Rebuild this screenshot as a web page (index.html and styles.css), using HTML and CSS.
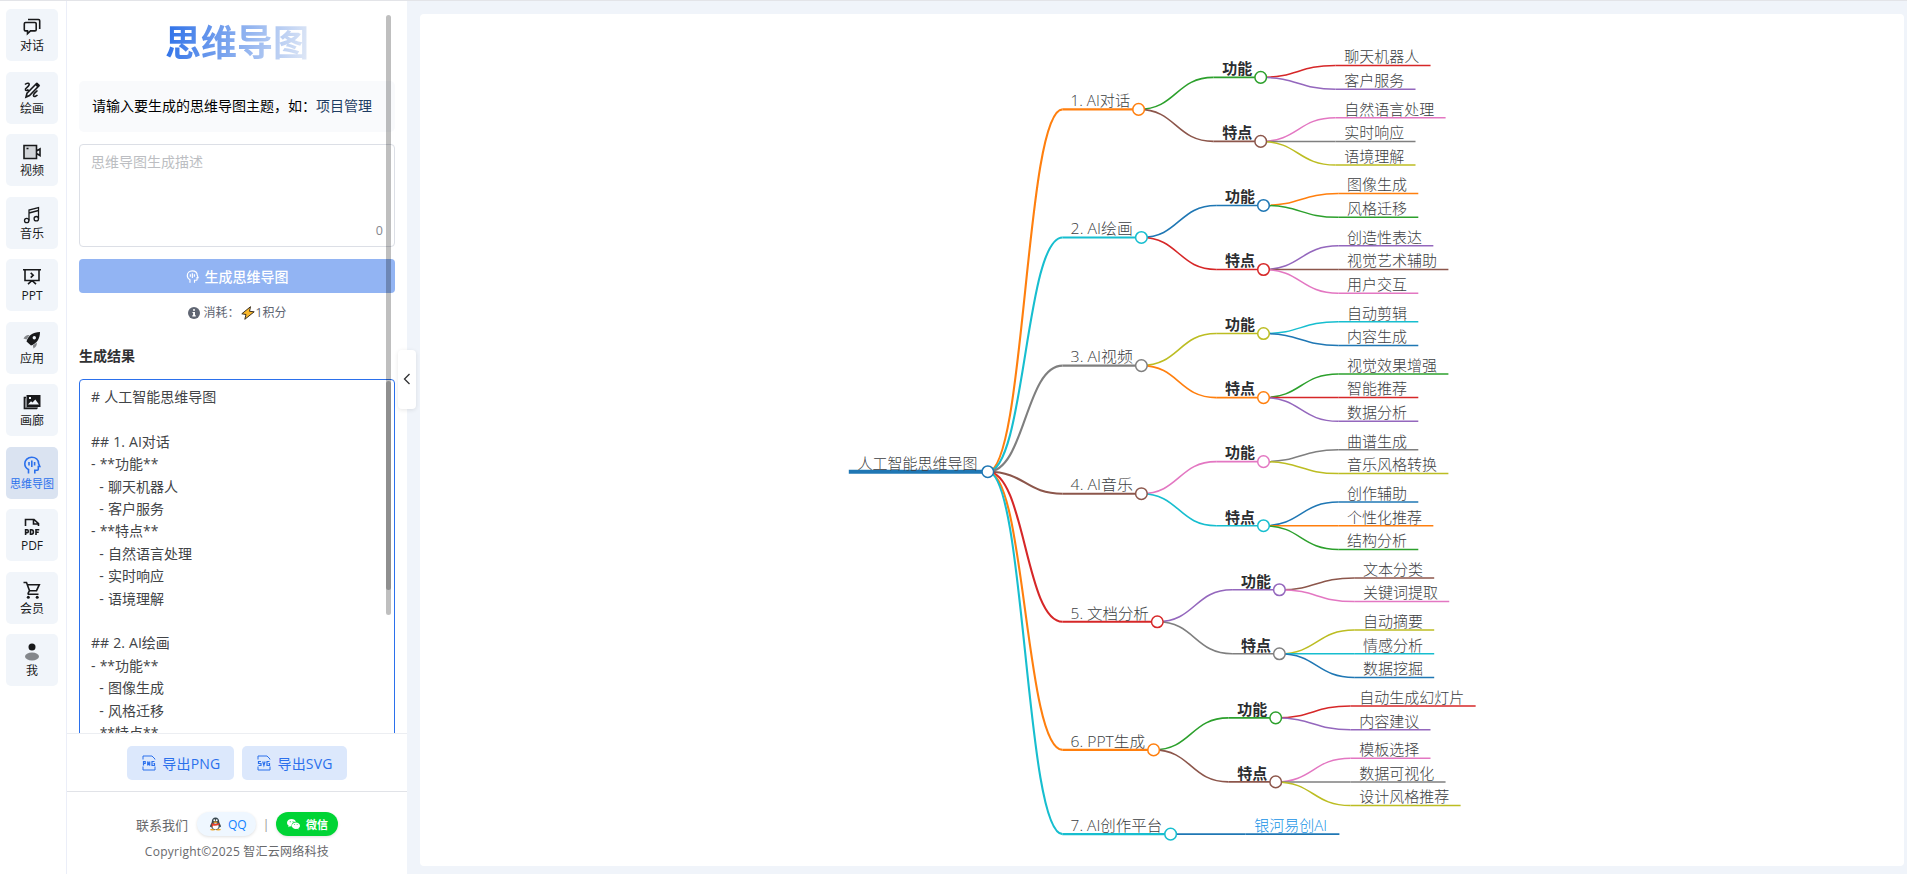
FILE: index.html
```html
<!DOCTYPE html>
<html lang="zh-CN">
<head>
    <meta charset="UTF-8">
    <meta name="viewport" content="width=device-width, initial-scale=1.0">
    <title>思维导图</title>
    <link rel="stylesheet" href="styles.css">
</head>
<body>
    <nav class="sidebar">
        <a class="nav-item">
            <svg viewBox="0 0 18 18"><path class="line" d="M5 1.500h10.500q1.200 0 1.200 1.200V11M2.500 4.500h9.500q1.200 0 1.200 1.200v6q0 1.200-1.200 1.200H7.500l-3 2.800v-2.800h-2q-1.200 0-1.200-1.200v-6q0-1.200 1.200-1.200z"/></svg>
            <span>对话</span>
        </a>
        <a class="nav-item">
            <svg viewBox="0 0 18 18"><path class="line" d="M2 3.500c2-2 5-1.500 4 .7C5 6.500 1.500 7.500 2.500 9c.8 1 2.500 0 3-.6M3 16l1-3.800L13.500 2.500l2.500 2.300L6.500 14.500zM14.500 9.500c-2 2-4.500 3.500-4 5.200.5 1.500 2.500.5 4-.7"/><path d="M12 3.800 14.200 1.600l2.600 2.500L14.500 6.500z"/></svg>
            <span>绘画</span>
        </a>
        <a class="nav-item">
            <svg viewBox="0 0 18 18"><rect class="soft-fill" x="1" y="2.500" width="12.500" height="13"/><path class="line" d="M1 2.500h12.500v13H1zM13.500 8l3.500-2v6.500l-3.500-2M3.500 5.500h2"/></svg>
            <span>视频</span>
        </a>
        <a class="nav-item">
            <svg viewBox="0 0 18 18"><path class="line thin" d="M6 14.500V4l9.500-2.500v11M6 7l9.500-2.500"/><circle class="line thin" cx="3.700" cy="14.500" r="2.200"/><circle class="line thin" cx="13.300" cy="12.700" r="2.200"/></svg>
            <span>音乐</span>
        </a>
        <a class="nav-item">
            <svg viewBox="0 0 18 18"><path class="line" d="M0 1.700h18M2 2v10.500h14V2M7.700 4.800l2.500 2.400-2.500 2.400M9 12.500l-4 3.700M9 12.500l4 3.700"/></svg>
            <span>PPT</span>
        </a>
        <a class="nav-item">
            <svg viewBox="0 0 18 18"><path d="M3.500 10.500C5.500 4.500 9.500 1 17 1 17 8 13.500 12.500 8 14.500z"/><path class="soft" d="M.5 7.500C2 4.700 4 3.500 6.500 4l-3 4.500zM10.500 17.500c2.500-1.500 3.700-3.500 3.300-6l-4 3z"/><circle class="hole" cx="11.300" cy="6.800" r="1.700"/></svg>
            <span>应用</span>
        </a>
        <a class="nav-item">
            <svg viewBox="0 0 18 18"><path class="soft" d="M1 5h2v9h12v2H1z"/><path class="line thin" d="M3 4.500H1.300V15.500H14"/><path fill-rule="evenodd" d="M3.500 2h14v12h-14zM5 11.500h11l-3.700-5-2.800 3-1.500-1.300zM6 4v2h2V4z"/></svg>
            <span>画廊</span>
        </a>
        <a class="nav-item active">
            <svg viewBox="0 0 18 18"><use href="#brain"/></svg>
            <span>思维导图</span>
        </a>
        <a class="nav-item">
            <svg viewBox="0 0 18 18"><path class="line" d="M2.500 8V1.500H11l4.500 4.200V8M10.500 1.500V6h5"/><path class="line" d="M2.600 17v-5.200h1.500q1.200 0 1.200 1.500t-1.200 1.500H2.600M7.500 11.800v4.500h1q1.900 0 1.900-2.200t-1.900-2.300zM13 17v-5.200h3.300M13 14.300h2.700"/></svg>
            <span>PDF</span>
        </a>
        <a class="nav-item">
            <svg viewBox="0 0 18 18"><path class="line" d="M.5 1.500h3l3 8.200-1.300 2.500q-.5 1 .8 1h9.500M4.300 3.700h12l-2.800 6h-7"/><circle cx="5.300" cy="16.300" r="1.500"/><circle cx="14.200" cy="16.300" r="1.500"/></svg>
            <span>会员</span>
        </a>
        <a class="nav-item">
            <svg viewBox="0 0 18 18"><circle cx="9" cy="4" r="3.500"/><ellipse class="soft" cx="9" cy="13.500" rx="7" ry="4"/></svg>
            <span>我</span>
        </a>
    </nav>

    <aside class="panel">
        <div class="panel-body">
            <h1>思维导图</h1>
            <div class="hint">请输入要生成的思维导图主题，如：<a>项目管理</a></div>
            <div class="prompt">
                <span class="placeholder">思维导图生成描述</span>
                <span class="count">0</span>
            </div>
            <button class="btn-generate">
                <svg viewBox="0 0 18 18"><use href="#brain"/></svg>
                生成思维导图
            </button>
            <div class="cost">
                <svg class="info" viewBox="0 0 12 12"><circle cx="6" cy="6" r="6"/><path d="M5 2.300h2v1.500H5zM4.500 5H7v3.200h.8v1.200H4.300V8.200h.8V6h-.6z" fill="#fff"/></svg>
                <span>消耗：</span>
                <svg class="bolt" viewBox="0 0 14 14"><path d="M9.500.7.800 7.800l4.200.7L3.800 13.300 13.200 5.800 8.500 5.300z" fill="#fbb92c" stroke="#3a3023" stroke-width="1"/></svg>
                <span>1积分</span>
            </div>
            <h2>生成结果</h2>
            <pre class="result"># 人工智能思维导图

## 1. AI对话
- **功能**
  - 聊天机器人
  - 客户服务
- **特点**
  - 自然语言处理
  - 实时响应
  - 语境理解

## 2. AI绘画
- **功能**
  - 图像生成
  - 风格迁移
- **特点**</pre>
            <i class="scroll scroll-outer"></i>
            <i class="scroll scroll-inner"></i>
        </div>
        <div class="export">
            <button class="btn-export">
                <svg viewBox="0 0 14 16"><path d="M1 4.500V1h9l3 3v.5M1 11.500V15h12v-3.500"/><path class="tag" d="M1.500 10.500v-4h1.700v2H1.500M5.700 10.500v-4l2 4v-4M12.500 6.500H10v4h2.500v-2h-1"/></svg>
                导出PNG
            </button>
            <button class="btn-export">
                <svg viewBox="0 0 14 16"><path d="M1 4.500V1h9l3 3v.5M1 11.500V15h12v-3.500"/><path class="tag" d="M4 6.500H1.500v2H4v2H1.500M5.700 6.500l1.200 4 1.200-4M12.500 6.500H10v4h2.500v-2h-1"/></svg>
                导出SVG
            </button>
        </div>
        <footer>
            <div class="contact">
                <span>联系我们</span>
                <a class="pill qq">
                    <svg viewBox="0 0 14 14"><ellipse cx="4" cy="13" rx="2.800" ry="1" fill="#f5a623"/><ellipse cx="10" cy="13" rx="2.800" ry="1" fill="#f5a623"/><path d="M7 0C4.500 0 3 1.800 3 4.500 3 6 .8 8 1 10.500l1.300-.8C2.800 12 4.500 13 7 13s4.200-1 4.700-3.300l1.300.8C13.200 8 11 6 11 4.500 11 1.800 9.500 0 7 0z" fill="#37474f"/><ellipse cx="7" cy="9.500" rx="3.300" ry="3.200" fill="#fff"/><path d="M2.800 6q4.200 2 8.400 0v1.800q-4.200 1.700-7 .8V10H3z" fill="#e8402a"/><circle cx="5.700" cy="3" r="1" fill="#fff"/><circle cx="8.300" cy="3" r="1" fill="#fff"/><ellipse cx="7" cy="5.200" rx="2.300" ry=".8" fill="#f5a623"/></svg>
                    QQ
                </a>
                <span class="divider">|</span>
                <a class="pill wechat">
                    <svg viewBox="0 0 14 12"><path d="M5 .5C2.200.5 0 2.300 0 4.600c0 1.300.7 2.400 1.800 3.200L1.300 9.500 3.200 8.500l1.800.3C4.500 5.500 7 3.500 9.700 3.700 9.200 1.800 7.200.5 5 .5z" fill="#fff"/><path d="M9.600 4.400c-2.500 0-4.400 1.600-4.400 3.500s1.900 3.500 4.400 3.500l1.500-.3 1.500.8-.4-1.400C13.300 9.900 14 9 14 7.900c0-1.900-1.900-3.500-4.400-3.500z" fill="#fff"/><path d="M3 3h1v1H3zM6 3h1v1H6zM7.800 6.300h.9v.9h-.9zM10.500 6.300h.9v.9h-.9z" fill="#00d435"/></svg>
                    微信
                </a>
            </div>
            <div class="copyright">Copyright©2025 智汇云网络科技</div>
        </footer>
        <button class="collapse">
            <svg viewBox="0 0 8 12"><path d="M6.500 1 1.500 6l5 5"/></svg>
        </button>
    </aside>

    <main>
        <svg id="mindmap" class="mindmap"></svg>
    </main>

    <svg class="defs">
        <symbol id="brain" viewBox="0 0 18 18">
            <path class="line" d="M5.500 17.500v-4C3 12.200 1.800 10 1.800 7.700 1.800 4 4.800 1.200 8.700 1.200s6.700 2.600 6.900 6.300l1.200 3h-1.500v2.700q0 1-1 1h-2.500v3.300"/>
            <path class="line" d="M6 6v3.500M8.800 4.500v6.500M11.600 6v3.500"/>
        </symbol>
    </svg>
    <script src="script.js"></script>
</body>
</html>
```
FILE: styles.css
```css
* {
    margin: 0;
    padding: 0;
    box-sizing: border-box;
}

body {
    display: flex;
    height: 100vh;
    overflow: hidden;
    border-top: 1px solid #e3e4e8;
    background: #f0f4fa;
    color: #303133;
    font-family: "Open Sans", "Noto Sans CJK SC", sans-serif;
    font-size: 14px;
}

button {
    border: none;
    font-family: inherit;
    cursor: pointer;
}

.defs {
    position: absolute;
    width: 0;
    height: 0;
}

.line {
    fill: none;
    stroke: currentColor;
    stroke-width: 1.6;
}

.line.thin {
    stroke-width: 1.3;
}

.soft {
    opacity: 0.5;
}

.soft-fill {
    opacity: 0.15;
}

.hole {
    fill: #f0f4fa;
}

/* Sidebar */
.sidebar {
    width: 67px;
    padding: 8px 0 0 6px;
    display: flex;
    flex-direction: column;
    gap: 10.5px;
    background: #fff;
    border-right: 1px solid #ebeef8;
}

.nav-item {
    width: 52px;
    height: 52px;
    padding-top: 9px;
    display: flex;
    flex-direction: column;
    align-items: center;
    gap: 1px;
    flex-shrink: 0;
    border-radius: 5px;
    background: #f1f5fa;
    color: #18191b;
    font-size: 12px;
    line-height: 18px;
    white-space: nowrap;
}

.nav-item svg {
    width: 18px;
    height: 18px;
    fill: currentColor;
}

.nav-item.active {
    background: #dae3f1;
    color: #2b70ec;
    font-size: 11px;
}

/* Left panel */
.panel {
    position: relative;
    width: 340px;
    display: flex;
    flex-direction: column;
    background: #fff;
}

.panel-body {
    height: 733px;
    padding: 0 12px;
    overflow: hidden;
    border-bottom: 1px solid #eceef2;
    flex-shrink: 0;
}

h1 {
    width: 144px;
    margin: 16px auto 12px;
    font-size: 36px;
    line-height: 52px;
    white-space: nowrap;
    background: linear-gradient(100deg, #2b6fe8 0%, #e3eaf6 100%);
    -webkit-background-clip: text;
    background-clip: text;
    color: transparent;
}

.hint {
    height: 51px;
    padding-left: 13px;
    border-radius: 5px;
    background: #f9fafc;
    color: #000;
    line-height: 49px;
    white-space: nowrap;
}

.hint a {
    color: #1d3c62;
}

.prompt {
    height: 103px;
    margin-top: 12px;
    padding: 6px 11px 4px;
    display: flex;
    flex-direction: column;
    justify-content: space-between;
    border: 1px solid #dcdfe6;
    border-radius: 4px;
    line-height: 22px;
}

.placeholder {
    color: #bcbec2;
}

.count {
    align-self: flex-end;
    color: #85888e;
    font-size: 12.5px;
}

.btn-generate {
    width: 100%;
    height: 34px;
    margin-top: 12px;
    display: flex;
    align-items: center;
    justify-content: center;
    gap: 6px;
    border-radius: 4px;
    background: #92b4f3;
    color: #fff;
    font-size: 14px;
    font-weight: 500;
}

.btn-generate svg {
    width: 13px;
    height: 13px;
}

.cost {
    margin-top: 10px;
    display: flex;
    align-items: center;
    justify-content: center;
    color: #606673;
    font-size: 12px;
    line-height: 20px;
}

.cost .info {
    width: 12px;
    height: 12px;
    margin-right: 4px;
    fill: #606673;
}

.cost .bolt {
    width: 14px;
    height: 14px;
    margin: 0 1px;
}

h2 {
    margin: 22px 0 12px;
    font-size: 14px;
    line-height: 22px;
}

.result {
    height: 500px;
    padding: 6px 11px;
    border: 1px solid #2b70ec;
    border-radius: 4px;
    color: #424447;
    font-family: inherit;
    line-height: 22.4px;
    word-spacing: 0.5px;
}

/* scrollbar thumbs drawn over the panel */
.scroll {
    position: absolute;
    left: 319px;
    width: 5px;
    border-radius: 3px;
    background: rgba(0, 0, 0, 0.25);
}

.scroll-outer {
    top: 14px;
    height: 600px;
}

.scroll-inner {
    top: 380px;
    height: 209px;
}

.export {
    padding: 12px 0 11px;
    display: flex;
    justify-content: center;
    gap: 8px;
    border-bottom: 1px solid #e1e3e8;
}

.btn-export {
    height: 34px;
    padding: 0 14px 0 15px;
    display: flex;
    align-items: center;
    gap: 6px;
    border-radius: 5px;
    background: #dce8fc;
    color: #2b70ec;
    font-size: 14px;
    letter-spacing: 0.2px;
}

.btn-export svg {
    width: 14px;
    height: 16px;
    fill: none;
    stroke: currentColor;
}

.btn-export .tag {
    stroke-width: 1.2;
}

footer {
    padding-top: 20px;
    color: #68696c;
    font-size: 13px;
}

.contact {
    display: flex;
    align-items: center;
    justify-content: center;
    height: 24px;
}

.pill {
    height: 24px;
    display: flex;
    align-items: center;
    gap: 6px;
    border-radius: 12px;
    font-size: 12px;
    box-shadow: 0 1px 3px rgba(0, 0, 0, 0.12);
}

.pill svg {
    width: 13px;
    height: 14px;
}

.qq {
    width: 59px;
    margin-left: 9px;
    padding-left: 12px;
    background: #eff7ff;
    color: #1283ff;
}

.divider {
    width: 20px;
    text-align: center;
    color: #999;
}

.wechat {
    width: 62px;
    padding-left: 11px;
    background: #00d435;
    color: #fff;
    font-size: 11px;
    font-weight: bold;
}

.copyright {
    margin-top: 6px;
    text-align: center;
    font-size: 12px;
    line-height: 20px;
    letter-spacing: 0.25px;
}

.collapse {
    position: absolute;
    left: 331px;
    top: 349px;
    width: 18px;
    height: 59px;
    border-radius: 4px;
    background: #fff;
    box-shadow: 0 1px 4px rgba(0, 0, 0, 0.1);
}

.collapse svg {
    width: 8px;
    height: 12px;
    fill: none;
    stroke: #303133;
    stroke-width: 1.3;
}

/* Mind map */
main {
    flex: 1;
    padding: 13px 3px 8px 13px;
    display: flex;
}

.mindmap {
    flex: 1;
    background: #fff;
    border-radius: 4px;
    font-size: 15px;
    font-family: "Open Sans", "Noto Sans CJK SC", sans-serif;
}

.mindmap text {
    fill: #3c3e42;
    font-weight: 300;
}

.mindmap .bold {
    fill: #2c2e31;
    font-weight: bold;
}

.mindmap .link {
    fill: #1492e6;
}

.mindmap path {
    fill: none;
}

.mindmap circle {
    fill: #fff;
    stroke-width: 1.5;
}
```
FILE: script.js
```js
const COLORS = ['#1f77b4', '#ff7f0e', '#2ca02c', '#d62728', '#9467bd', '#8c564b', '#e377c2', '#7f7f7f', '#bcbd22', '#17becf'];
const GAP_X = 74.8;
const ROW = 23.7;
const GROUP_GAP = 4.8;
const LINE_WIDTH = [3.8, 2.1, 1.6, 1.5];

function section(title, width, features, traits) {
    return {
        title, width,
        children: [
            { title: '功能', width: 47.3, bold: true, children: features.map(t => ({ title: t })) },
            { title: '特点', width: 47.3, bold: true, children: traits.map(t => ({ title: t })) }
        ]
    };
}

const root = {
    title: '人工智能思维导图',
    width: 139,
    children: [
        section('1. AI对话', 76, ['聊天机器人', '客户服务'], ['自然语言处理', '实时响应', '语境理解']),
        section('2. AI绘画', 78.8, ['图像生成', '风格迁移'], ['创造性表达', '视觉艺术辅助', '用户交互']),
        section('3. AI视频', 78.8, ['自动剪辑', '内容生成'], ['视觉效果增强', '智能推荐', '数据分析']),
        section('4. AI音乐', 78.8, ['曲谱生成', '音乐风格转换'], ['创作辅助', '个性化推荐', '结构分析']),
        section('5. 文档分析', 94.7, ['文本分类', '关键词提取'], ['自动摘要', '情感分析', '数据挖掘']),
        section('6. PPT生成', 91, ['自动生成幻灯片', '内容建议'], ['模板选择', '数据可视化', '设计风格推荐']),
        { title: '7. AI创作平台', width: 108, children: [{ title: '银河易创AI', width: 94, link: true }] }
    ]
};

let colorIndex = 0;
let cursorY = 51.5;
let lastParent = null;

// leaves are stacked top to bottom, parents sit midway between their children
function layout(node, x, depth, parent) {
    node.x = x;
    node.depth = depth;
    node.color = COLORS[colorIndex++ % COLORS.length];
    node.width = node.width || node.title.length * 15.05 + 19.8;
    if (node.children) {
        node.children.forEach(c => layout(c, x + node.width + GAP_X, depth + 1, node));
        node.y = (node.children[0].y + node.children[node.children.length - 1].y) / 2;
    } else {
        if (lastParent) {
            cursorY += ROW + (lastParent === parent ? 0 : GROUP_GAP);
        }
        lastParent = parent;
        node.y = cursorY;
    }
}

function draw(node) {
    const { x, y, width, depth, color } = node;
    const end = x + width;
    let links = '';
    let nodes = `<path d="M${x} ${y}H${end}" stroke="${color}" stroke-width="${LINE_WIDTH[depth]}"/>`;
    const cls = node.bold ? 'bold' : node.link ? 'link' : '';
    const fit = depth === 1 ? ` textLength="${width - 16.5}" lengthAdjust="spacingAndGlyphs"` : '';
    nodes += `<text class="${cls}" x="${x + (depth === 1 ? 8 : 8.8)}" y="${y - 3.2}"${fit}>${node.title}</text>`;
    if (node.children) {
        node.children.forEach(c => {
            const mid = (end + c.x) / 2;
            links += `<path d="M${end} ${y}C${mid} ${y} ${mid} ${c.y} ${c.x} ${c.y}" stroke="${c.color}" stroke-width="${LINE_WIDTH[c.depth]}"/>`;
        });
        const inner = node.children.map(draw).join('');
        return links + nodes + `<circle cx="${end}" cy="${y}" r="5.8" stroke="${color}"/>` + inner;
    }
    return nodes;
}

layout(root, 428.8, 0, null);
document.getElementById('mindmap').innerHTML = draw(root);
```
